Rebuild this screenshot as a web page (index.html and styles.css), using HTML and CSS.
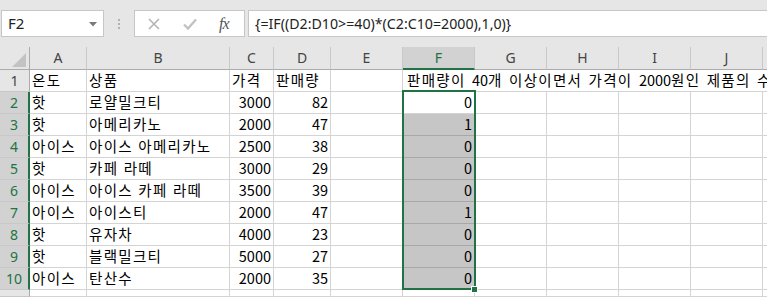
FILE: index.html
```html
<!DOCTYPE html>
<html lang="ko">
<head>
<meta charset="utf-8">
<link rel="stylesheet" href="styles.css">
</head>
<body>
<div class="app">
  <div class="fbar">
    <div class="namebox">
      <span class="nb-text">F2</span>
      <svg class="nb-arrow" width="8" height="5" viewBox="0 0 8 5"><path d="M0 0H8L4 4.5Z" fill="#7a7a7a"/></svg>
    </div>
    <div class="grip"><i></i><i></i><i></i></div>
    <div class="btns">
      <svg class="ic-x" width="12" height="12" viewBox="0 0 12 12"><path d="M1 1L11 11M11 1L1 11" stroke="#b4b4b4" stroke-width="1.6" fill="none"/></svg>
      <svg class="ic-ok" width="14" height="12" viewBox="0 0 14 12"><path d="M1 6.5L5 10.5L13 1.5" stroke="#c2c2c2" stroke-width="2.4" fill="none"/></svg>
      <span class="fx">fx</span>
    </div>
    <div class="formula">{=IF((D2:D10&gt;=40)*(C2:C10=2000),1,0)}</div>
  </div>
  <div class="sheet">
    <div class="ch corner"><svg width="14" height="14" viewBox="0 0 14 14"><path d="M14 0V14H0Z" fill="#c3c3c3"/></svg></div>
    <div class="ch">A</div><div class="ch">B</div><div class="ch">C</div><div class="ch">D</div><div class="ch">E</div>
    <div class="ch chs">F</div><div class="ch">G</div><div class="ch">H</div><div class="ch">I</div><div class="ch">J</div><div class="ch"></div>

    <div class="rh">1</div><div class="c">온도</div><div class="c">상품</div><div class="c">가격</div><div class="c">판매량</div><div class="c"></div>
    <div class="c ov">판매량이 <span class="dg">40</span>개 이상이면서 가격이 <span class="dg">2000</span>원인 제품의 수</div><div class="c nr"></div><div class="c nr"></div><div class="c nr"></div><div class="c nr"></div><div class="c nr"></div>

    <div class="rh rhs">2</div><div class="c">핫</div><div class="c">로얄밀크티</div><div class="c n">3000</div><div class="c n">82</div><div class="c"></div><div class="c n">0</div><div class="c"></div><div class="c"></div><div class="c"></div><div class="c"></div><div class="c"></div>
    <div class="rh rhs">3</div><div class="c">핫</div><div class="c">아메리카노</div><div class="c n">2000</div><div class="c n">47</div><div class="c"></div><div class="c n sf">1</div><div class="c"></div><div class="c"></div><div class="c"></div><div class="c"></div><div class="c"></div>
    <div class="rh rhs">4</div><div class="c">아이스</div><div class="c">아이스 아메리카노</div><div class="c n">2500</div><div class="c n">38</div><div class="c"></div><div class="c n sf">0</div><div class="c"></div><div class="c"></div><div class="c"></div><div class="c"></div><div class="c"></div>
    <div class="rh rhs">5</div><div class="c">핫</div><div class="c">카페 라떼</div><div class="c n">3000</div><div class="c n">29</div><div class="c"></div><div class="c n sf">0</div><div class="c"></div><div class="c"></div><div class="c"></div><div class="c"></div><div class="c"></div>
    <div class="rh rhs">6</div><div class="c">아이스</div><div class="c">아이스 카페 라떼</div><div class="c n">3500</div><div class="c n">39</div><div class="c"></div><div class="c n sf">0</div><div class="c"></div><div class="c"></div><div class="c"></div><div class="c"></div><div class="c"></div>
    <div class="rh rhs">7</div><div class="c">아이스</div><div class="c">아이스티</div><div class="c n">2000</div><div class="c n">47</div><div class="c"></div><div class="c n sf">1</div><div class="c"></div><div class="c"></div><div class="c"></div><div class="c"></div><div class="c"></div>
    <div class="rh rhs">8</div><div class="c">핫</div><div class="c">유자차</div><div class="c n">4000</div><div class="c n">23</div><div class="c"></div><div class="c n sf">0</div><div class="c"></div><div class="c"></div><div class="c"></div><div class="c"></div><div class="c"></div>
    <div class="rh rhs">9</div><div class="c">핫</div><div class="c">블랙밀크티</div><div class="c n">5000</div><div class="c n">27</div><div class="c"></div><div class="c n sf">0</div><div class="c"></div><div class="c"></div><div class="c"></div><div class="c"></div><div class="c"></div>
    <div class="rh rhs">10</div><div class="c">아이스</div><div class="c">탄산수</div><div class="c n">2000</div><div class="c n">35</div><div class="c"></div><div class="c n sf">0</div><div class="c"></div><div class="c"></div><div class="c"></div><div class="c"></div><div class="c"></div>
    <div class="rh"></div><div class="c"></div><div class="c"></div><div class="c"></div><div class="c"></div><div class="c"></div><div class="c"></div><div class="c"></div><div class="c"></div><div class="c"></div><div class="c"></div><div class="c"></div>

    <div class="sel"></div>
    <div class="handle"></div>
  </div>
</div>
</body>
</html>
```
FILE: styles.css
```css
html, body {
  margin: 0;
  padding: 0;
  background: #e6e6e6;
  overflow: hidden;
}
.app {
  width: 767px;
  height: 297px;
  overflow: hidden;
  font-family: "Noto Sans", "Noto Sans CJK KR", sans-serif;
}
.fbar {
  height: 47px;
  box-sizing: border-box;
  padding: 10px 0 0 1px;
  display: flex;
  align-items: flex-start;
  background: #e6e6e6;
}
.namebox {
  width: 103px;
  height: 27px;
  box-sizing: border-box;
  border: 1px solid #c6c6c6;
  background: #fff;
  display: flex;
  align-items: center;
  justify-content: space-between;
  padding: 0 6px 0 6px;
}
.nb-text {
  font-size: 15px;
  color: #222;
  line-height: 25px;
}
.nb-arrow { margin-top: 1px; }
.grip {
  width: 30px;
  height: 27px;
  display: flex;
  flex-direction: column;
  align-items: center;
  justify-content: center;
  gap: 2px;
}
.grip i {
  display: block;
  width: 2px;
  height: 2px;
  background: #b0b0b0;
}
.btns {
  width: 111px;
  height: 27px;
  box-sizing: border-box;
  border: 1px solid #c6c6c6;
  background: #fff;
  display: flex;
  align-items: center;
  padding-left: 13px;
}
.ic-x { margin-right: 23px; }
.ic-ok { margin-right: 22px; }
.fx {
  font-family: "Liberation Serif", serif;
  font-style: italic;
  font-size: 16px;
  color: #555;
  letter-spacing: -1px;
}
.formula {
  flex: 1;
  margin-left: 3px;
  height: 27px;
  box-sizing: border-box;
  border: 1px solid #c6c6c6;
  border-right: none;
  background: #fff;
  font-size: 14.2px;
  line-height: 25px;
  padding-left: 6px;
  color: #222;
  white-space: nowrap;
}
.sheet {
  position: relative;
  height: 250px;
  background: #fff;
  display: grid;
  grid-template-columns: 30px 57px 143px 44px 57px 72px 72px 72px 72px 72px 72px 1fr;
  grid-template-rows: 23px repeat(10, 22px) 1fr;
  overflow: hidden;
}
.ch {
  background: #e6e6e6;
  border-right: 1px solid #c8c8c8;
  border-bottom: 1px solid #ababab;
  box-sizing: border-box;
  font-size: 14px;
  color: #444;
  text-align: center;
  line-height: 22px;
}
.corner {
  display: flex;
  align-items: flex-end;
  justify-content: flex-end;
  padding: 0 3px 2px 0;
  border-right-color: #ababab;
}
.chs {
  background: #d2d2d2;
  color: #217346;
  border-bottom: 2px solid #217346;
  line-height: 21px;
}
.rh {
  background: #e6e6e6;
  border-right: 1px solid #ababab;
  border-bottom: 1px solid #c8c8c8;
  box-sizing: border-box;
  font-size: 14px;
  color: #444;
  text-align: center;
  line-height: 21px;
}
.rhs {
  background: #d2d2d2;
  color: #217346;
  border-right: 2px solid #217346;
}
.c {
  box-sizing: border-box;
  border-right: 1px solid #d4d4d4;
  border-bottom: 1px solid #d4d4d4;
  font-family: "Noto Sans CJK KR", sans-serif;
  font-size: 14.5px;
  line-height: 20px;
  letter-spacing: 1.3px;
  color: #000;
  padding: 0 2px 0 2px;
  white-space: nowrap;
  overflow: hidden;
}
.n { text-align: right; padding-right: 2px; letter-spacing: 0; }
.nr { border-right: none; }
.ov { overflow: visible; border-right: none; padding-left: 4px; word-spacing: 1px; }
.dg { letter-spacing: 0; }
.sf {
  background: #c6c6c6;
  border-bottom-color: #a8a8a8;
}
.sel {
  position: absolute;
  left: 402px;
  top: 43px;
  width: 74px;
  height: 200px;
  box-sizing: border-box;
  border: 2px solid #217346;
  pointer-events: none;
}
.handle {
  position: absolute;
  left: 471px;
  top: 239px;
  width: 7px;
  height: 7px;
  box-sizing: border-box;
  background: #217346;
  border: 1px solid #fff;
}
```
